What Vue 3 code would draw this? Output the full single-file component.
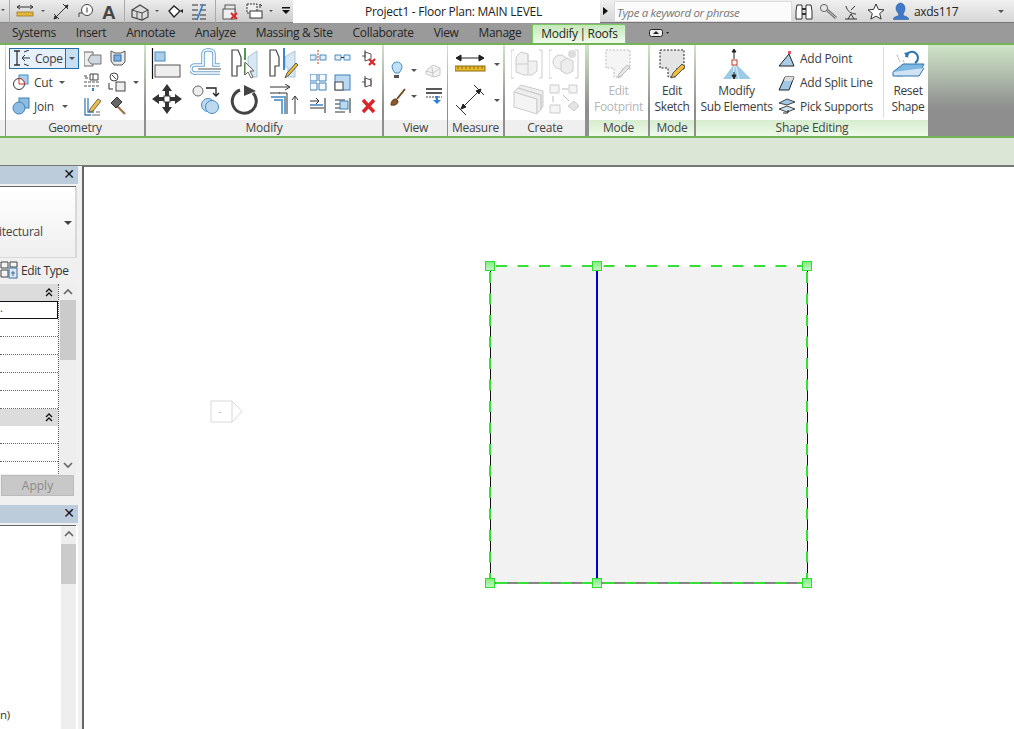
<script setup>
const tabs = ['Systems', 'Insert', 'Annotate', 'Analyze', 'Massing & Site', 'Collaborate', 'View', 'Manage']
const propRows = [1, 2, 3, 4, 5]
</script>

<template>
  <div class="app">
    <header class="titlebar">
      <div class="qat">
        <svg class="ic" width="293" height="23" viewBox="0 0 293 23">
          <path d="M1 9l2 2 2-2z" fill="#555"/>
          <path d="M9.500 0v23" stroke="#aaa"/>
          <path d="M17 7h16M17 7l3-2M17 7l3 2M33 7l-3-2M33 7l-3 2" stroke="#333" fill="none"/>
          <rect x="17" y="12" width="16" height="4" fill="#e3b83a" stroke="#8c6d12" stroke-width=".7"/>
          <path d="M41 10l2 2 2-2z" fill="#555"/>
          <path d="M54 19L68 5M54 14l5 5M63 4l5 5M54 19l3-1-2-2zM68 5l-3 1 2 2z" stroke="#333" fill="#333"/>
          <path d="M79 17v-4h4" stroke="#444" fill="none"/>
          <circle cx="87" cy="10" r="5.500" fill="#fff" stroke="#444"/>
          <path d="M87 7.500v5" stroke="#333"/>
          <text x="102" y="19" class="qat-a">A</text>
          <path d="M124.500 0v23" stroke="#aaa"/>
          <path d="M132 10l8-5 8 5v7l-6 3-10-3z" fill="#ddd" stroke="#444" stroke-width="1.200"/>
          <path d="M137 12v6M142 13v7M132 10l10 3 6-3" stroke="#444" fill="none"/>
          <path d="M155 10l2 2 2-2z" fill="#555"/>
          <path d="M169 11l5-5 6 5-6 6z" fill="#fff" stroke="#222" stroke-width="1.300"/>
          <path d="M180 11l3-2v4z" fill="#222"/>
          <path d="M192 5h15M192 10h15M192 15h15M192 19h15" stroke="#333" stroke-dasharray="6 2"/>
          <path d="M197 20l6-16" stroke="#2f7fd0" stroke-width="1.500"/>
          <path d="M215.500 0v23" stroke="#aaa"/>
          <rect x="225" y="5" width="10" height="7" fill="#e8e8e8" stroke="#555"/>
          <rect x="223" y="9" width="12" height="10" fill="#eee" stroke="#555"/>
          <path d="M231 13l6 6m0-6l-6 6" stroke="#d8262c" stroke-width="2"/>
          <rect x="247" y="4" width="10" height="9" fill="#eee" stroke="#333" stroke-dasharray="2 1"/>
          <rect x="250" y="11" width="12" height="7" fill="#fff" stroke="#333"/>
          <path d="M260 8V4l2 2" stroke="#333" fill="none"/>
          <path d="M269 10l2 2 2-2z" fill="#555"/>
          <path d="M282 7h8v1.500h-8zM282 10h8l-4 4z" fill="#111"/>
        </svg>
      </div>
      <div class="doc-title">Project1 - Floor Plan: MAIN LEVEL</div>
      <div class="infobar">
        <span class="tri"></span>
        <div class="search">Type a keyword or phrase</div>
        <svg class="ic" width="100" height="23" viewBox="793 0 100 23">
          <path d="M798 5h5v14h-6v-8zM807 5h5l1 6v8h-6z" fill="#fff" stroke="#333"/>
          <path d="M803 9h4M803 14h4" stroke="#333" stroke-width="2"/>
          <path d="M827 9l10 9" stroke="#666" stroke-width="3"/><path d="M827 9l10 9" stroke="#ddd"/>
          <circle cx="825" cy="8" r="3.600" fill="#e6e6e6" stroke="#666"/>
          <path d="M847 6c1 5 5 8 10 8M852 10l4-4M846 19h12M852 14l-3 5M852 14l3 5" stroke="#333" fill="none"/>
          <path d="M877 4l2.400 5.400 5.600.5-4.300 3.600 1.400 5.600-5.100-3-5.100 3 1.400-5.600-4.300-3.600 5.600-.5z" fill="#fff" stroke="#333"/>
        </svg>
        <svg class="ic" width="18" height="23" viewBox="892 0 18 23">
          <path d="M900.500 3a4.500 5.500 0 0 1 4.500 5.500c0 3-2 5-2 6.500 1 1.500 5 1.500 5.500 3.500v1h-15v-1c.5-2 4.500-2 5.500-3.500 0-1.500-3-3.500-3-6.500a4.500 5.500 0 0 1 4.500-5.500z" fill="#3f79c7" stroke="#2a5ba8" stroke-width=".6"/>
        </svg>
        <span class="user">axds117</span>
        <span class="caret user-caret"></span>
      </div>
    </header>

    <nav class="tabs">
      <span v-for="t in tabs" :key="t" class="tab">{{ t }}</span>
      <span class="tab tab-active">Modify | Roofs</span>
      <svg class="ic tab-min" width="20" height="8" viewBox="0 0 20 8">
        <rect x=".5" y=".5" width="13" height="7" rx="2" fill="#eee" stroke="#222"/>
        <path d="M4 5l3-3 3 3z" fill="#222"/><path d="M17 3l1.800 2 1.200-2z" fill="#222"/>
      </svg>
    </nav>

    <section class="ribbon">
      <div class="panel p-stub"><div class="body"></div><div class="plabel"></div></div>

      <div class="panel p-geo">
        <div class="body geo">
          <div class="split">
            <svg class="ic" width="18" height="16" viewBox="12 50 18 16">
              <path d="M13 51h6M13 65h6M16 51v14" stroke="#333" stroke-width="1.300"/>
              <path d="M21 58h8M21 58l3-3M21 58l3 3M23 52l5-2M23 64l5 2" stroke="#333" fill="none"/>
            </svg>
            <span class="lbl cope">Cope</span>
            <span class="split-arrow"><span class="caret"></span></span>
          </div>
          <svg class="ic" width="18" height="19" viewBox="84 48 18 19">
            <path d="M84 51h9v14h-9z" fill="#eee" stroke="#666"/><path d="M91 54l10 0v9h-10l-3-4z" fill="#cfd8de" stroke="#777"/>
          </svg>
          <svg class="ic" width="16" height="16" viewBox="110 50 16 16">
            <path d="M111 51l4 2h6l4-2v11l-3 3-8 0-3-4z" fill="#e8e8e8" stroke="#555"/>
            <rect x="114" y="55" width="7" height="6" fill="#7cb0de" stroke="#2e6ea6"/>
          </svg>

          <div class="gbtn">
            <svg class="ic" width="18" height="18" viewBox="12 73 18 18">
              <rect x="19" y="75" width="9" height="9" fill="#a9cdeb" stroke="#4a8cc0"/>
              <circle cx="19" cy="84" r="5.500" fill="#fff" stroke="#333"/>
              <path d="M19 84v-5.500a5.500 5.500 0 0 1 5.500 5.500z" fill="#fff" stroke="#c0392b"/>
            </svg>
            <span class="lbl">Cut</span><span class="caret cut-caret"></span>
          </div>
          <svg class="ic" width="17" height="20" viewBox="84 72 17 20">
            <path d="M87 76h-3M85 78h3M90 74h8v6h-8zM93 74v6" stroke="#444" fill="none"/>
            <path d="M84 82h16M84 86h16" stroke="#555" stroke-dasharray="3 1"/><path d="M93 88v3" stroke="#2f7fd0" stroke-width="2"/>
          </svg>
          <div class="gsm">
            <svg class="ic" width="18" height="20" viewBox="108 73 18 20">
              <circle cx="114" cy="78" r="4" fill="#fff" stroke="#444"/>
              <path d="M112 76l4 4" stroke="#444"/>
              <rect x="116" y="83" width="9" height="9" fill="#eee" stroke="#444"/>
              <path d="M109 84v6h4" stroke="#333" fill="none"/>
            </svg>
            <span class="caret"></span>
          </div>

          <div class="gbtn">
            <svg class="ic" width="18" height="18" viewBox="12 97 18 18">
              <rect x="19" y="98" width="10" height="10" fill="#8fbce3" stroke="#3f80b8"/>
              <circle cx="19" cy="108" r="6" fill="#8fbce3" stroke="#3f80b8"/>
            </svg>
            <span class="lbl">Join</span><span class="caret join-caret"></span>
          </div>
          <svg class="ic" width="17" height="19" viewBox="84 96 17 19">
            <path d="M85 97v17h6M88 97v14h6" stroke="#3f80b8" stroke-width="1.300" fill="none"/>
            <path d="M92 114h8M96 111h4" stroke="#666"/>
            <path d="M90 108l8-10 3 2-8 10-4 1z" fill="#f0c040" stroke="#666"/>
          </svg>
          <svg class="ic" width="17" height="18" viewBox="109 97 17 18">
            <path d="M115 105l9 9" stroke="#9c7a55" stroke-width="2.400"/>
            <path d="M110 103l6-6 5 5-6 6z" fill="#666" stroke="#333"/>
          </svg>
        </div>
        <div class="plabel">Geometry</div>
      </div>

      <div class="panel p-mod">
        <div class="body mod">
          <div class="mod-large">
            <svg class="ic" width="31" height="32" viewBox="151 47 31 32">
              <path d="M152.500 48v31" stroke="#111" stroke-width="1.200"/>
              <rect x="155" y="52" width="10" height="9" fill="#a9cdeb" stroke="#4a8cc0"/>
              <rect x="155" y="65" width="25" height="12" fill="#eee" stroke="#555"/>
            </svg>
            <svg class="ic" width="32" height="30" viewBox="190 47 32 30">
              <path d="M220 73h-24a4 4 0 0 1-2-8h9V54a4 4 0 0 1 4-4h3a4 4 0 0 1 4 4v11h6" stroke="#6ea3cf" stroke-width="3.600" fill="none"/>
              <path d="M220 73h-24a4 4 0 0 1-2-8h9V54a4 4 0 0 1 4-4h3a4 4 0 0 1 4 4v11h6" stroke="#fff" stroke-width="1.600" fill="none"/>
              <path d="M198 69h23" stroke="#555"/>
            </svg>
            <svg class="ic" width="29" height="32" viewBox="230 47 29 32">
              <path d="M232 50h6l3 7v9h-4v10h-5z" fill="#fff" stroke="#444" stroke-width="1.200"/>
              <path d="M245 48v30" stroke="#4a9e47" stroke-width="2" stroke-dasharray="12 3"/>
              <path d="M257 51v26h-6V67h-3V57z" fill="#d7e7f3" stroke="#a9c5da"/>
              <path d="M245 62v13l3-3 3 6 2-1-3-6h4z" fill="#fff" stroke="#666"/>
            </svg>
            <svg class="ic" width="30" height="32" viewBox="269 47 30 32">
              <path d="M270 50h6l3 7v9h-4v10h-5z" fill="#fff" stroke="#444" stroke-width="1.200"/>
              <path d="M295 51v26h-7V67h-3V57z" fill="#d7e7f3" stroke="#a9c5da"/>
              <path d="M284 48v22" stroke="#3f86c8" stroke-width="2"/>
              <path d="M285 78l2-5 9-10 2 2-9 10z" fill="#f0bf3a" stroke="#555"/>
            </svg>
            <svg class="ic" width="31" height="31" viewBox="151 84 31 31">
              <path d="M167 84l5 7h-3v5h-4v-5h-3zM167 114l5-7h-3v-5h-4v5h-3zM152 99l7-5v3h5v4h-5v3zM182 99l-7-5v3h-5v4h5v3z" fill="#333"/>
              <rect x="164" y="96" width="6" height="6" fill="#fff" stroke="#333"/>
            </svg>
            <svg class="ic" width="31" height="31" viewBox="190 84 31 31">
              <circle cx="198" cy="91" r="5" fill="#eee" stroke="#666"/>
              <path d="M206 88h10v7M213 93l3 3 3-3" stroke="#222" stroke-width="1.300" fill="none"/>
              <circle cx="208" cy="105" r="6.500" fill="#bcd9f0" stroke="#4a8cc0"/>
              <circle cx="212" cy="107" r="6.500" fill="#bcd9f0" stroke="#4a8cc0"/>
            </svg>
            <svg class="ic" width="29" height="31" viewBox="230 84 29 31">
              <path d="M240 90a12 12 0 1 0 13 3" fill="none" stroke="#444" stroke-width="3"/>
              <path d="M244 85l12 6-12 5z" fill="#444"/>
            </svg>
            <svg class="ic" width="30" height="31" viewBox="269 84 30 31">
              <path d="M270 87h19M285 84l5 3-5 3M270 93h10" stroke="#333" fill="none"/>
              <path d="M271 97h14v17M274 100h8v14" stroke="#6ea3cf" stroke-width="2" fill="none"/>
              <path d="M279 93h8v21" stroke="#333" fill="none"/>
              <path d="M295 114V97M292 100l3-4 3 4" stroke="#333" fill="none"/>
            </svg>
          </div>
          <div class="mod-small">
            <svg class="ic" width="17" height="16" viewBox="310 50 17 16">
              <path d="M310 55h6v5h-6zM320 55h6v5h-6z" fill="#e3eef7" stroke="#4a8cc0"/>
              <path d="M318 50v15" stroke="#c0392b" stroke-dasharray="2 1"/>
            </svg>
            <svg class="ic" width="17" height="16" viewBox="334 50 17 16">
              <path d="M335 55h6v5h-6zM344 55h6v5h-6z" fill="#e3eef7" stroke="#4a8cc0"/>
              <path d="M341 57.500h3" stroke="#333"/>
            </svg>
            <svg class="ic" width="17" height="16" viewBox="360 50 17 16">
              <path d="M362 56h3M365 52l6 2v5l-6 2z" fill="#fff" stroke="#555"/><path d="M365 50v8" stroke="#555"/>
              <path d="M369 59l6 6m0-6l-6 6" stroke="#d8262c" stroke-width="2.200"/>
            </svg>
            <svg class="ic" width="17" height="17" viewBox="310 74 17 17">
              <path d="M310 74h7v7h-7zM319 74h7v7h-7zM310 83h7v7h-7zM319 83h7v7h-7z" fill="#f4f9fd" stroke="#3f80b8"/>
            </svg>
            <svg class="ic" width="17" height="17" viewBox="334 74 17 17">
              <rect x="335" y="75" width="15" height="15" fill="#bcd9f0" stroke="#3f80b8"/>
              <rect x="335" y="82" width="8" height="8" fill="#fff" stroke="#444"/>
            </svg>
            <svg class="ic" width="17" height="16" viewBox="360 74 17 16">
              <path d="M362 82h3M365 78l6 2v5l-6 2zM371 78v9M365 76v10" fill="#fff" stroke="#555"/>
            </svg>
            <svg class="ic" width="17" height="17" viewBox="310 97 17 17">
              <path d="M310 101h9M316 98l3 3-3 3M310 108h14" stroke="#333" fill="none"/><path d="M310 105h13" stroke="#6ea3cf" stroke-width="2"/><path d="M325 98v15" stroke="#222"/>
            </svg>
            <svg class="ic" width="17" height="17" viewBox="334 97 17 17">
              <path d="M335 100h10M335 104h10M335 108h10M335 112h10" stroke="#333"/><rect x="340" y="101" width="8" height="8" fill="#bcd9f0" stroke="#3f80b8"/><path d="M350 98v15" stroke="#222"/>
            </svg>
            <svg class="ic" width="17" height="17" viewBox="360 97 17 17">
              <path d="M363 100l11 12m0-12l-11 12" stroke="#d8262c" stroke-width="3.400"/>
            </svg>
          </div>
        </div>
        <div class="plabel">Modify</div>
      </div>

      <div class="panel p-view">
        <div class="body view">
          <svg class="ic" width="14" height="18" viewBox="391 59 14 18">
            <path d="M393 65a5 5 0 1 1 9 3l-2 3h-4l-2-3z" fill="#bfe0f7" stroke="#4a8cc0"/><path d="M395 73h5v3h-5z" fill="#555"/>
          </svg>
          <span class="caret"></span>
          <svg class="ic" width="17" height="16" viewBox="425 61 17 16">
            <path d="M426 70l7-6 7 3v7l-6 2-8-3z" fill="#f3f3f3" stroke="#c9c9c9"/><path d="M432 66l1 10M426 70l7 2 7-5" stroke="#c9c9c9" fill="none"/>
          </svg>
          <svg class="ic" width="17" height="19" viewBox="390 84 17 19">
            <path d="M391 102c0-4 2-6 5-6l2 2c0 3-3 5-7 4z" fill="#8a5a2c" stroke="#5a3815"/><path d="M397 96l8-10" stroke="#6e4a20" stroke-width="2"/>
          </svg>
          <span class="caret"></span>
          <svg class="ic" width="17" height="17" viewBox="424 87 17 17">
            <path d="M425 88h16" stroke="#222" stroke-width="1.500"/><path d="M425 92h16" stroke="#222" stroke-width="1.500"/><path d="M425 96h16" stroke="#444" stroke-dasharray="2 1"/>
            <path d="M434 95h3v4h3l-4 4-4-4h3z" fill="#2f7fd0"/>
          </svg>
        </div>
        <div class="plabel">View</div>
      </div>

      <div class="panel p-meas">
        <div class="body meas">
          <svg class="ic" width="31" height="21" viewBox="455 53 31 21">
            <path d="M456 58h28M456 58l5-3v6zM484 58l-5-3v6z" stroke="#222" fill="#222"/>
            <rect x="455" y="66" width="30" height="5" fill="#e9b92e" stroke="#8c6d12"/>
            <path d="M458 66v3M462 66v3M466 66v3M470 66v3M474 66v3M478 66v3M482 66v3" stroke="#8c6d12"/>
          </svg>
          <span class="caret mc1"></span>
          <svg class="ic" width="31" height="31" viewBox="455 85 31 31">
            <path d="M462 108l18-18M456 105l10 10M474 85l10 10" stroke="#333"/>
            <path d="M461 109l2-5 3 3zM481 89l-2 5-3-3z" fill="#222" stroke="#222"/>
          </svg>
          <span class="caret mc2"></span>
        </div>
        <div class="plabel">Measure</div>
      </div>

      <div class="panel p-create">
        <div class="body create">
          <svg class="ic" width="32" height="30" viewBox="511 49 32 30">
            <path d="M514 50h-3v28h3M539 50h3v28h-3" stroke="#ccc" fill="none"/>
            <path d="M516 57l5-5 7 2v7h9v10l-5 4h-8l-8-3z" fill="#f1f1f1" stroke="#ccc"/><path d="M516 64h12v10M528 54v10" stroke="#ccc" fill="none"/>
          </svg>
          <svg class="ic" width="30" height="30" viewBox="549 49 30 30">
            <path d="M552 50h-3v28h3M575 50h3v28h-3" stroke="#ccc" fill="none"/>
            <circle cx="560" cy="62" r="7" fill="#f1f1f1" stroke="#ccc"/>
            <path d="M561 62l6-4 6 3v10l-6 3-6-3z" fill="#ededed" stroke="#ccc"/><circle cx="572" cy="54" r="4" fill="#ddd"/>
          </svg>
          <svg class="ic" width="34" height="33" viewBox="510 84 34 33">
            <path d="M513 92l23 7v15l-23-7z" fill="#f4f4f4" stroke="#ccc"/><path d="M517 88l23 7v15l-4 3V99l-23-7zM520 85l22 6v15l-2 3V95l-23-7z" fill="#ededed" stroke="#ccc"/>
          </svg>
          <svg class="ic" width="30" height="33" viewBox="549 84 30 33">
            <path d="M550 85h9v8h-9zM569 85h8v8h-8zM550 105h10v8h-10z" fill="#f4f4f4" stroke="#ccc"/><path d="M562 89h6M553 96v6M563 95l6 6" stroke="#bbb"/><path d="M568 106l6-5 5 5-5 5z" fill="#e4e4e4" stroke="#ccc"/>
          </svg>
        </div>
        <div class="plabel">Create</div>
      </div>

      <div class="panel p-mode1 ctx">
        <div class="body stack">
          <svg class="ic" width="28" height="30" viewBox="603 49 28 30">
            <path d="M604 50h24v19h-8v8h-8v-9h-8z" fill="#f5f5f5" stroke="#bbb" stroke-dasharray="2 1.500"/>
            <path d="M616 78l1-4 8-9 3 2-9 9z" fill="#e7e7e7" stroke="#bbb"/>
          </svg>
          <div class="stack-text off">Edit<br>Footprint</div>
        </div>
        <div class="plabel">Mode</div>
      </div>

      <div class="panel p-mode2 ctx">
        <div class="body stack">
          <svg class="ic" width="28" height="30" viewBox="658 49 28 30">
            <path d="M660 50h24v19h-8v8h-8v-9h-8z" fill="#e4e4e4" stroke="#222" stroke-dasharray="2 1.500"/>
            <path d="M671 78l2-5 9-9 3 3-9 9z" fill="#f0bf3a" stroke="#555"/>
          </svg>
          <div class="stack-text">Edit<br>Sketch</div>
        </div>
        <div class="plabel">Mode</div>
      </div>

      <div class="panel p-shape ctx">
        <div class="body shape">
          <div class="stack sub">
            <svg class="ic" width="30" height="30" viewBox="721 49 30 30">
              <path d="M722 79l12-16 16 16z" fill="#9ccbe6"/><path d="M734 63l4 16M734 63l-3 16" stroke="#e6f2fa"/>
              <path d="M733 49l-2 3h4zM733 52v7M733 72v5M731 75l2 4 2-4z" stroke="#222" fill="#222"/>
              <rect x="731" y="60" width="5" height="5" fill="#fff" stroke="#c0392b"/>
            </svg>
            <div class="stack-text">Modify<br>Sub Elements</div>
          </div>
          <ul class="shape-list">
            <li><svg class="ic" width="17" height="17" viewBox="779 49 17 17">
              <path d="M780 65l10-12 5 12z" fill="#a9cde6" stroke="#222"/><rect x="789" y="50" width="3" height="3" fill="#d85c5c"/>
            </svg>Add Point</li>
            <li><svg class="ic" width="17" height="17" viewBox="779 74 17 17">
              <path d="M780 90l6-13h9l-5 13z" fill="#9fc7e6" stroke="#222"/><path d="M786 77l9 0-2 4h-8z" fill="#ddd"/>
            </svg>Add Split Line</li>
            <li><svg class="ic" width="17" height="17" viewBox="779 98 17 17">
              <path d="M780 103l8-4 8 3-8 3z" fill="#9fc7e6" stroke="#444"/><path d="M780 109l8-3 8 3-8 3z" fill="#cfe2f1" stroke="#444"/><path d="M784 113h5v-3" stroke="#222" fill="none"/>
            </svg>Pick Supports</li>
          </ul>
          <div class="stack reset">
            <svg class="ic" width="33" height="30" viewBox="892 49 33 30">
              <path d="M893 72l10-8h21l-5 10-22 2z" fill="#7db8e2" stroke="#2f75ad"/><path d="M893 72v4h26l5-8" fill="#cfe3f3" stroke="#2f75ad"/>
              <path d="M906 57a6 6 0 1 1 9 6" stroke="#2f75ad" stroke-width="2" fill="none"/><path d="M904 53l5-1-1 6z" fill="#2f75ad"/>
              <path d="M897 55l3 7M903 60l3 6" stroke="#aaa" stroke-dasharray="2 1"/>
            </svg>
            <div class="stack-text">Reset<br>Shape</div>
          </div>
        </div>
        <div class="plabel">Shape Editing</div>
      </div>
    </section>

    <div class="options"></div>

    <main class="work">
      <aside class="side">
        <div class="pal-head"><span class="close">✕</span></div>
        <div class="pal-rule"></div>
        <div class="selector">
          <span class="sel-text">itectural</span>
          <span class="sel-caret"></span>
        </div>
        <div class="edit-type">
          <svg class="ic" width="18" height="18" viewBox="0 0 18 18">
            <path d="M1 1h7v6H1zM1 9h7v7H1zM10 1h7v5h-7z" fill="#f4f4f4" stroke="#444"/>
            <rect x="9" y="7" width="8" height="10" fill="#dde8f2" stroke="#3e6e9c"/><path d="M11 12h4M13 10v5" stroke="#3e6e9c"/>
          </svg>
          <span>Edit Type</span>
        </div>
        <div class="props">
          <div class="grid">
            <div class="sec"><svg class="chev" width="8" height="9" viewBox="0 0 8 9"><path d="M1 4l3-3 3 3M1 8l3-3 3 3" stroke="#111" stroke-width="1.300" fill="none"/></svg></div>
            <div class="row current"><span>.</span></div>
            <div v-for="r in propRows" :key="r" class="row"></div>
            <div class="sec"><svg class="chev" width="8" height="9" viewBox="0 0 8 9"><path d="M1 4l3-3 3 3M1 8l3-3 3 3" stroke="#111" stroke-width="1.300" fill="none"/></svg></div>
            <div class="row"></div><div class="row"></div><div class="row last"></div>
          </div>
          <div class="sbar">
            <svg class="sarrow" width="10" height="7" viewBox="0 0 10 7"><path d="M1 6l4-4 4 4" stroke="#666" stroke-width="1.600" fill="none"/></svg>
            <div class="thumb t1"></div>
            <svg class="sarrow down" width="10" height="7" viewBox="0 0 10 7"><path d="M1 1l4 4 4-4" stroke="#666" stroke-width="1.600" fill="none"/></svg>
          </div>
        </div>
        <div class="apply-row"><button class="apply">Apply</button></div>
        <div class="pal-head second"><span class="close">✕</span></div>
        <div class="pal-rule"></div>
        <div class="browser">
          <span class="tree-text">n)</span>
          <div class="sbar b2">
            <svg class="sarrow" width="10" height="7" viewBox="0 0 10 7"><path d="M1 6l4-4 4 4" stroke="#666" stroke-width="1.600" fill="none"/></svg>
            <div class="thumb t2"></div>
          </div>
        </div>
      </aside>
      <div class="canvas">
        <svg class="drawing" width="930" height="562" viewBox="84 167 930 562">
          <path d="M211 401h21l10 10.500-10 10.500h-21zM232 401v21" fill="#fff" stroke="#d9d9d9"/>
          <text x="218" y="415" class="tag">-</text>
          <rect x="490" y="266" width="317" height="317" fill="#f2f2f2"/>
          <path d="M490.500 266V583H807.500V266" fill="none" stroke="#111"/>
          <path d="M495 266H807" stroke="#fff" stroke-width="2"/>
          <path d="M496 266H807" stroke="#35e035" stroke-width="2" stroke-dasharray="11 10.500"/>
          <path d="M496 583H807" stroke="#35e035" stroke-width="2" stroke-dasharray="11 10.500"/>
          <path d="M490 272V583" stroke="#35e035" stroke-width="2" stroke-dasharray="11 10.500"/>
          <path d="M807 272V583" stroke="#35e035" stroke-width="2" stroke-dasharray="11 10.500"/>
          <path d="M597 270V578" stroke="#0000d2" stroke-width="2"/>
          <defs>
            <linearGradient id="hd" x1="0" y1="0" x2="0" y2="1"><stop offset="0" stop-color="#7cf07c"/><stop offset="1" stop-color="#c5f5c5"/></linearGradient>
          </defs>
          <rect x="485.500" y="261.500" width="9" height="9" fill="url(#hd)" stroke="#2fdc2f"/>
          <rect x="592.500" y="261.500" width="9" height="9" fill="url(#hd)" stroke="#2fdc2f"/>
          <rect x="802.500" y="261.500" width="9" height="9" fill="url(#hd)" stroke="#2fdc2f"/>
          <rect x="485.500" y="578.500" width="9" height="9" fill="url(#hd)" stroke="#2fdc2f"/>
          <rect x="592.500" y="578.500" width="9" height="9" fill="url(#hd)" stroke="#2fdc2f"/>
          <rect x="802.500" y="578.500" width="9" height="9" fill="url(#hd)" stroke="#2fdc2f"/>
        </svg>
      </div>
    </main>
  </div>
</template>

<style>
html, body { margin: 0; background: #fff; }
</style>

<style scoped>
.app {
  width: 1014px;
  height: 729px;
  overflow: hidden;
  display: flex;
  flex-direction: column;
  font-family: "Open Sans", "Noto Sans", sans-serif;
  font-size: 12px;
  letter-spacing: -0.25px;
  color: #3c3c3c;
}
.ic { display: block; flex: none; }
.caret {
  display: inline-block;
  width: 0;
  height: 0;
  border: 3px solid transparent;
  border-top: 3px solid #555;
  border-bottom: 0;
  flex: none;
}

.titlebar { height: 23px; display: flex; background: #fff; }
.qat { width: 293px; background: linear-gradient(#ececec, #cdcdcd); border-bottom: 1px solid #888; box-sizing: border-box; height: 23px; }
.qat-a { font: bold 19px "Liberation Sans", sans-serif; fill: #444; }
.doc-title { width: 307px; box-sizing: border-box; padding: 3px 0 0 72px; color: #222; white-space: nowrap; }
.infobar { flex: 1; display: flex; align-items: center; position: relative; background: linear-gradient(#f0f0f0, #d6d6d6); border-bottom: 1px solid #777; height: 23px; box-sizing: border-box; letter-spacing: -0.33px; }
.tri { width: 0; height: 0; border: 4px solid transparent; border-left: 5px solid #111; border-right: 0; margin-left: 3px; flex: none; }
.search {
  width: 178px; height: 21px; margin-left: 6px; box-sizing: border-box; padding: 3px 0 0 2px;
  background: #fbfbfb; border: 1px solid #ddd; font-style: italic; color: #777; font-size: 11.500px; white-space: nowrap;
}
.user { margin-left: 4px; color: #222; }
.user-caret { position: absolute; left: 398px; top: 10px; }

.tabs { height: 20px; background: #9a9a9a; display: flex; align-items: center; padding-left: 3px; gap: 2px; box-sizing: border-box; color: #262626; letter-spacing: -0.33px; }
.tab { padding: 0 9px; line-height: 20px; white-space: nowrap; }
.tab-active {
  width: 94px; padding: 0 0 0 8px; height: 19px; align-self: flex-end; line-height: 18px; box-sizing: border-box; word-spacing: -1px;
  background: linear-gradient(#c4e8bb, #eefaea); border: 1px solid #78c860; border-bottom: 0; border-radius: 2px 2px 0 0;
}
.tab-min { margin-left: 21px; }

.ribbon {
  height: 95px; display: flex; box-sizing: border-box; gap: 1px;
  border-top: 2px solid #74b356; border-bottom: 2px solid #74b356;
  background: linear-gradient(#cfe5c8, #8e8e8e 70%);
}
.panel { display: flex; flex-direction: column; background: #fff; height: 91px; }
.body { height: 75px; box-sizing: border-box; }
.plabel { height: 16px; line-height: 15px; background: #efefef; text-align: center; color: #444; white-space: nowrap; }
.ctx .plabel { background: linear-gradient(#d6ecce, #eefae9); }
.p-stub { width: 5px; }
.p-geo { width: 138px; }
.p-mod { width: 236px; margin-left: 1px; }
.p-view { width: 63px; margin-left: 1px; }
.p-meas { width: 55px; }
.p-create { width: 80px; margin-left: 1px; margin-right: 3px; }
.p-mode1 { width: 59px; }
.p-mode2 { width: 44px; margin-left: 1px; }
.p-shape { width: 232px; margin-left: 1px; }

.geo { display: grid; grid-template-columns: 75px 26px 34px; grid-auto-rows: 24px; padding: 1px 0 0 3px; align-items: center; }
.split {
  width: 70px; height: 21px; box-sizing: border-box; display: flex; align-items: center; padding-left: 3px;
  background: #e6f1fb; border: 1px solid #1f6ea8; position: relative;
}
.cope { margin-left: 3px; }
.split-arrow { position: absolute; right: 0; top: 0; bottom: 0; width: 12px; background: #c8def2; border-left: 1px solid #1f6ea8; display: flex; align-items: center; justify-content: center; }
.gbtn { display: flex; align-items: center; padding-left: 3px; }
.lbl { margin-left: 4px; }
.cut-caret { margin-left: 7px; }
.join-caret { margin-left: 8px; }
.gsm { display: flex; align-items: center; gap: 7px; margin-left: -2px; }

.mod { display: flex; align-items: flex-start; padding: 2px 0 0 5px; }
.mod-large { display: grid; grid-template-columns: 39px 40px 39px 41px; grid-template-rows: 37px 31px; justify-items: start; align-items: start; }
.mod-small { display: grid; grid-template-columns: 24px 26px 17px; grid-template-rows: 24px 23px 17px; margin-top: 3px; justify-items: start; align-items: start; }

.view { display: grid; grid-template-columns: 21px 14px 17px; grid-template-rows: 26px 26px; align-items: center; justify-items: start; padding: 12px 0 0 6px; }
.meas { display: grid; grid-template-columns: 39px 8px; grid-template-rows: 32px 32px; align-items: start; padding: 8px 0 0 7px; }
.mc1 { margin-top: 10px; }
.mc2 { margin-top: 14px; }
.create { display: grid; grid-template-columns: 38px 30px; grid-template-rows: 35px 33px; padding: 4px 0 0 6px; align-items: start; }

.stack { display: flex; flex-direction: column; align-items: center; padding-top: 4px; }
.stack-text { text-align: center; line-height: 15.500px; margin-top: 4px; color: #3c3c3c; white-space: nowrap; letter-spacing: -0.33px; }
.off { color: #b5b5b5; }

.shape { display: flex; }
.sub { width: 83px; margin-left: -1px; }
.shape-list { list-style: none; margin: 0; padding: 1px 0 0 0; width: 105px; box-sizing: border-box; }
.shape-list li { height: 24px; display: flex; align-items: center; gap: 5px; white-space: nowrap; }
.reset { flex: 1; border-left: 1px solid #ddd; margin: 2px 0 2px 0; padding: 2px 0 0 4px; }

.options { height: 28px; background: #dbe6d6; border-bottom: 1px solid #777; box-sizing: border-box; }

.work { flex: 1; display: flex; min-height: 0; background: #f0f0f0; }
.side { box-sizing: border-box; padding-right: 4px; display: flex; flex-direction: column; border-right: 2px solid #666; flex: none; width: 84px; }
.pal-head { height: 18px; background: #bdccda; position: relative; flex: none; }
.pal-head.second { margin-top: 7px; }
.close { position: absolute; right: 3px; top: 0; line-height: 17px; font-size: 14px; color: #111; font-family: "DejaVu Sans", sans-serif; font-weight: 700; letter-spacing: 0; }
.pal-rule { height: 2px; border-bottom: 1px solid #666; flex: none; margin-right: 2px; }
.selector { height: 71px; background: linear-gradient(#fff, #efefef); border-right: 2px solid #d8d8d8; border-bottom: 1px solid #d8d8d8; position: relative; box-sizing: border-box; margin-right: 1px; }
.sel-text { position: absolute; left: -1px; bottom: 17px; color: #444; }
.sel-caret { position: absolute; right: 3px; top: 34px; width: 0; height: 0; border: 4px solid transparent; border-top: 4px solid #444; border-bottom: 0; }
.edit-type { height: 26px; display: flex; align-items: center; gap: 3px; color: #333; white-space: nowrap; box-sizing: border-box; padding-bottom: 2px; letter-spacing: -0.4px; }
.props { height: 190px; display: flex; }
.grid { width: 59px; height: 190px; background: #fff; border-right: 1px dotted #555; box-sizing: border-box; flex: none; overflow: hidden; }
.sec { height: 17px; background: #dcdcdc; position: relative; }
.chev { position: absolute; right: 5px; top: 4px; }
.row { height: 18px; border-bottom: 1px dotted #666; box-sizing: border-box; }
.row.last { border-bottom: 0; }
.row.current { border: 1px solid #111; border-left: 0; line-height: 12px; font-size: 11px; }
.sbar { width: 16px; margin-left: 1px; position: relative; background: #eee; flex: none; }
.sarrow { position: absolute; left: 3px; top: 4px; }
.sarrow.down { top: auto; bottom: 5px; }
.thumb { position: absolute; left: 0; right: 0; background: #cbcbcb; }
.t1 { top: 16px; height: 60px; }
.apply-row { height: 24px; box-sizing: border-box; padding: 1px 3px 0 1px; flex: none; }
.apply { width: 73px; height: 21px; background: #c8c8c8; border: 1px solid #bbb; color: #8a8a8a; font: inherit; padding: 0; display: block; }
.browser { flex: 1; background: #fff; position: relative; }
.tree-text { position: absolute; left: 0; top: 181px; color: #333; font-size: 11.500px; }
.b2 { position: absolute; right: 2px; top: 0; bottom: 0; margin: 0; width: 15px; }
.t2 { top: 18px; height: 40px; }
.canvas { flex: 1; background: #fff; overflow: hidden; min-width: 0; border-top: 1px solid #777; }
.drawing { display: block; }
.tag { font: 10px "Open Sans", sans-serif; fill: #bbb; }
</style>
